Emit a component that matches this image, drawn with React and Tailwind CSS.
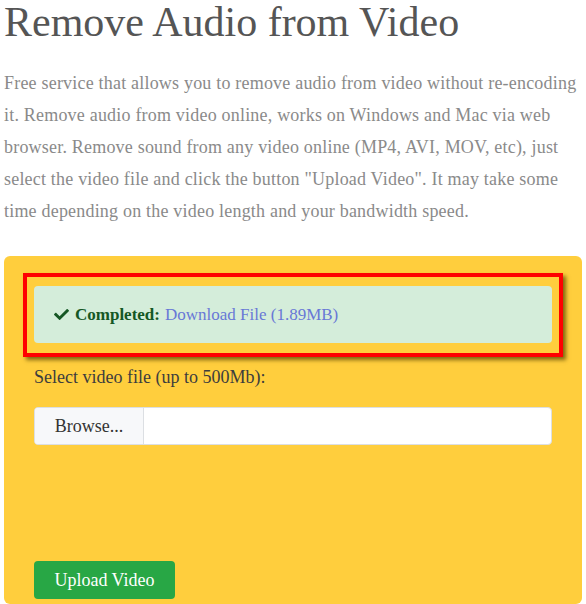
import React from "react";

const serif = { fontFamily: '"Liberation Serif", "DejaVu Serif", serif' };

const App = () => {
  return (
    <div className="min-h-screen bg-white px-1" style={serif}>
      <h1 className="text-[42px] leading-[48px] text-[#555555] -mt-[2px]">
        Remove Audio from Video
      </h1>

      <p className="mt-[21px] text-[18px] leading-[32px] tracking-[0.2px] text-[#8a8a8a]">
        Free service that allows you to remove audio from video without re-encoding
        it. Remove audio from video online, works on Windows and Mac via web
        browser. Remove sound from any video online (MP4, AVI, MOV, etc), just
        select the video file and click the button "Upload Video". It may take some
        time depending on the video length and your bandwidth speed.
      </p>

      <div className="mt-[29px] w-[578px] rounded-md bg-[#ffce3d] px-[19px] pt-[17px] pb-[5px]">
        <div className="border-4 border-[#ff0000] px-[7px] pt-[9px] pb-[10px] shadow-[3px_3px_4px_rgba(90,70,0,0.75)]">
          <div className="flex h-[57px] items-center rounded bg-[#d4edda] px-[20px] text-[17px] text-[#155724]">
            <svg
              viewBox="0 0 512 512"
              className="mr-[6px] h-[15px] w-[15px]"
              fill="#155724"
            >
              <path d="M173.9 439.4l-166.4-166.4c-10-10-10-26.2 0-36.2l36.2-36.2c10-10 26.2-10 36.2 0L192 312.7 432.1 72.6c10-10 26.2-10 36.2 0l36.2 36.2c10 10 10 26.2 0 36.2l-294.4 294.4c-10 10-26.2 10-36.2 0z" />
            </svg>
            <span className="font-bold">Completed:</span>
            <a href="#" className="ml-[5px] text-[#6878d6]">
              Download File (1.89MB)
            </a>
          </div>
        </div>

        <div className="px-[11px]">
          <p className="mt-[8px] text-[18px] leading-[24px] text-[#3d3d3d]">
            Select video file (up to 500Mb):
          </p>

          <div className="mt-[18px] flex h-[38px] overflow-hidden rounded border border-[#dcdfe3] bg-white text-[18px] text-[#333333]">
            <div className="flex w-[109px] items-center justify-center border-r border-[#dcdfe3] bg-[#f7f8fa]">
              Browse...
            </div>
            <div className="flex-1" />
          </div>

          <div className="h-[116px]" />

          <button
            type="button"
            className="h-[38px] w-[141px] rounded bg-[#28a745] text-[18px] text-white"
          >
            Upload Video
          </button>
        </div>
      </div>
    </div>
  );
};

export default App;
